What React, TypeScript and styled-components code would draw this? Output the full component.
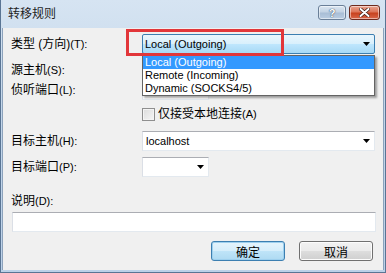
import React from 'react';
import styled, { createGlobalStyle } from 'styled-components';

const GlobalStyle = createGlobalStyle`
  html, body {
    margin: 0;
    padding: 0;
    background: #ffffff;
  }
  body {
    font-family: "Liberation Sans", "Noto Sans CJK SC", sans-serif;
    font-size: 12px;
    color: #000;
  }
`;

const Window = styled.div`
  position: relative;
  width: 386px;
  height: 273px;
  box-sizing: border-box;
  display: flex;
  flex-direction: column;
  background: linear-gradient(180deg, #d6e4f2 0%, #c3d6ea 40%, #bcd1e8 100%);
  border-left: 1px solid #5a7594;
  border-right: 1px solid #5a7594;
  border-bottom: 1px solid #5a7594;
  padding: 0 1px 2px 1px;
  overflow: hidden;
`;

const TitleBar = styled.div`
  height: 28px;
  display: flex;
  align-items: flex-start;
  padding: 5px 4px 0 6px;
  box-sizing: border-box;
`;

const Title = styled.div`
  font-family: "Noto Sans CJK SC", sans-serif;
  font-size: 12px;
  line-height: 16px;
  color: #1e1e1e;
`;

const CaptionButtons = styled.div`
  margin-left: auto;
  display: flex;
  gap: 3px;
`;

const CaptionButton = styled.div<{ $close?: boolean; $w: number }>`
  width: ${(p) => p.$w}px;
  height: 15px;
  box-sizing: border-box;
  border: 1px solid ${(p) => (p.$close ? '#6d2a1e' : '#6a7f98')};
  border-radius: 3px;
  display: flex;
  align-items: center;
  justify-content: center;
  background: ${(p) =>
    p.$close
      ? 'linear-gradient(180deg, #eba592 0%, #dc7458 45%, #c8421f 55%, #d8664a 100%)'
      : 'linear-gradient(180deg, #dbe6f1 0%, #c3d3e4 45%, #a9bed6 55%, #b9cde2 100%)'};
  box-shadow: inset 0 0 0 1px rgba(255, 255, 255, 0.5);
  color: #fff;
  font-family: "Liberation Sans", sans-serif;
  font-weight: bold;
  font-size: 11px;
  text-shadow: 0 0 1px #33465e, 0 0 1px #33465e;
`;

const Client = styled.div`
  flex: 1;
  background: #f0f0f0;
  border-left: 1px solid #8ca2bb;
  border-right: 1px solid #8ca2bb;
  padding: 6px 8px 0 8px;
  display: flex;
  flex-direction: column;
`;

const Row = styled.div<{ $top?: number; $h?: number }>`
  display: flex;
  align-items: center;
  margin-top: ${(p) => p.$top ?? 0}px;
  height: ${(p) => p.$h ?? 20}px;
`;

const Label = styled.div`
  width: 131px;
  flex-shrink: 0;
  font-size: 12px;
  line-height: 14px;
  white-space: nowrap;
`;

const Lat = styled.span`
  font-size: 11px;
`;

const TextBox = styled.div<{ $w?: number }>`
  width: ${(p) => (p.$w ? `${p.$w}px` : 'auto')};
  flex: ${(p) => (p.$w ? '0 0 auto' : '1')};
  height: 20px;
  box-sizing: border-box;
  background: #fff;
  border: 1px solid #e3e9ef;
  border-top-color: #abadb3;
  border-left-color: #dbdfe6;
  display: flex;
  align-items: center;
  padding-left: 3px;
  font-size: 11px;
`;

const Combo = styled(TextBox)`
  padding-right: 4px;
  justify-content: space-between;
`;

const ActiveCombo = styled.div`
  flex: 1;
  height: 20px;
  box-sizing: border-box;
  border: 1px solid #3c7fb1;
  border-radius: 2px;
  background: linear-gradient(180deg, #eaf6fd 0%, #d9f0fc 48%, #bee6fd 52%, #a7d9f5 100%);
  display: flex;
  align-items: center;
  justify-content: space-between;
  padding: 0 4px 0 2px;
  font-size: 11px;
`;

const Arrow = () => (
  <svg width="7" height="4" viewBox="0 0 7 4">
    <path d="M0 0 H7 L3.5 4 Z" fill="#000" />
  </svg>
);

const CheckBox = styled.div`
  width: 13px;
  height: 13px;
  box-sizing: border-box;
  border: 1px solid #8f8f8f;
  background: linear-gradient(135deg, #dcdcdc 0%, #f6f6f6 100%);
  box-shadow: inset 0 0 0 1px #f4f4f4;
  margin-right: 3px;
`;

const CheckLabel = styled.div`
  font-size: 12px;
  line-height: 14px;
`;

const DescBox = styled(TextBox)`
  flex: none;
  margin-left: 1px;
  width: 364px;
`;

const Buttons = styled.div`
  display: flex;
  justify-content: flex-end;
  gap: 14px;
  margin-top: 9px;
  padding-right: 2px;
`;

const Button = styled.div<{ $default?: boolean }>`
  width: 74px;
  height: 20px;
  box-sizing: border-box;
  border: 1px solid ${(p) => (p.$default ? '#3c7fb1' : '#707070')};
  border-radius: 3px;
  background: ${(p) =>
    p.$default
      ? 'linear-gradient(180deg, #e5f4fc 0%, #d6eefb 48%, #bfe4f8 52%, #aedaf2 100%)'
      : 'linear-gradient(180deg, #f2f2f2 0%, #ebebeb 48%, #dddddd 52%, #cfcfcf 100%)'};
  box-shadow: inset 0 0 0 1px ${(p) => (p.$default ? '#9ed0ee' : '#fcfcfc')};
  display: flex;
  align-items: center;
  justify-content: center;
  font-family: "Noto Sans CJK SC", sans-serif;
  font-size: 12px;
`;

const DropList = styled.div`
  position: absolute;
  left: 141px;
  top: 55px;
  width: 233px;
  box-sizing: border-box;
  background: #fff;
  border: 1px solid #646464;
  box-shadow: 2px 2px 2px rgba(0, 0, 0, 0.35);
  font-size: 11px;
`;

const DropItem = styled.div<{ $sel?: boolean }>`
  height: 13px;
  line-height: 13px;
  padding-left: 2px;
  background: ${(p) => (p.$sel ? '#3399ff' : 'transparent')};
  color: ${(p) => (p.$sel ? '#fff' : '#000')};
  white-space: nowrap;
`;

const Highlight = styled.div`
  position: absolute;
  left: 125px;
  top: 29px;
  width: 158px;
  height: 27px;
  box-sizing: border-box;
  border: 3px solid #e2363a;
  pointer-events: none;
`;

const options = ['Local (Outgoing)', 'Remote (Incoming)', 'Dynamic (SOCKS4/5)'];

export default function App() {
  return (
    <>
      <GlobalStyle />
      <Window>
        <TitleBar>
          <Title>转移规则</Title>
          <CaptionButtons>
            <CaptionButton $w={28}>?</CaptionButton>
            <CaptionButton $w={31} $close>
              <svg width="11" height="9" viewBox="0 0 11 9">
                <path
                  d="M1.5 1 L9.5 8 M9.5 1 L1.5 8"
                  stroke="#3a1a12"
                  strokeWidth="3.4"
                  strokeLinecap="round"
                />
                <path
                  d="M1.5 1 L9.5 8 M9.5 1 L1.5 8"
                  stroke="#fff"
                  strokeWidth="2"
                  strokeLinecap="round"
                />
              </svg>
            </CaptionButton>
          </CaptionButtons>
        </TitleBar>
        <Client>
          <Row>
            <Label>
              类型 (方向)<Lat>(T):</Lat>
            </Label>
            <ActiveCombo>
              <span>Local (Outgoing)</span>
              <Arrow />
            </ActiveCombo>
          </Row>
          <Row $top={6}>
            <Label>
              源主机<Lat>(S):</Lat>
            </Label>
            <TextBox />
          </Row>
          <Row>
            <Label>
              侦听端口<Lat>(L):</Lat>
            </Label>
            <TextBox $w={67} />
          </Row>
          <Row $top={4}>
            <Label />
            <CheckBox />
            <CheckLabel>
              仅接受本地连接<Lat>(A)</Lat>
            </CheckLabel>
          </Row>
          <Row $top={7}>
            <Label>
              目标主机<Lat>(H):</Lat>
            </Label>
            <Combo>
              <span>localhost</span>
              <Arrow />
            </Combo>
          </Row>
          <Row $top={6}>
            <Label>
              目标端口<Lat>(P):</Lat>
            </Label>
            <Combo $w={67}>
              <span />
              <Arrow />
            </Combo>
          </Row>
          <Row $top={17} $h={14}>
            <Label>
              说明<Lat>(D):</Lat>
            </Label>
          </Row>
          <Row $top={4}>
            <DescBox />
          </Row>
          <Buttons>
            <Button $default>确定</Button>
            <Button>取消</Button>
          </Buttons>
        </Client>
        <DropList>
          {options.map((o, i) => (
            <DropItem key={o} $sel={i === 0}>
              {o}
            </DropItem>
          ))}
        </DropList>
        <Highlight />
      </Window>
    </>
  );
}
